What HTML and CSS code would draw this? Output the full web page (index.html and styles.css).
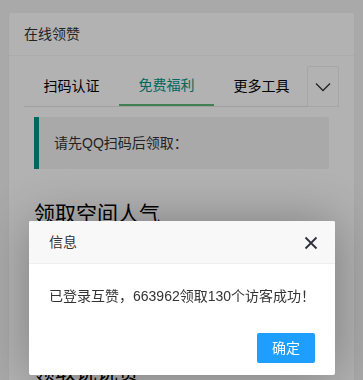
FILE: index.html
```html
<!DOCTYPE html>
<html lang="zh-CN">
<head>
<meta charset="UTF-8">
<meta name="viewport" content="width=device-width, initial-scale=1.0">
<title>在线领赞</title>
<link rel="stylesheet" href="styles.css">
</head>
<body>

<div class="card">
  <div class="card-header">在线领赞</div>
  <div class="card-body">
    <div class="tab">
      <ul class="tab-title">
        <li>扫码认证</li>
        <li class="this">免费福利</li>
        <li>更多工具</li>
      </ul>
      <span class="tab-bar">
        <svg width="16" height="10" viewBox="0 0 16 10"><path d="M1 1.5 L8 8.5 L15 1.5" fill="none" stroke="#333" stroke-width="1.3"/></svg>
      </span>
      <div class="tab-content">
        <blockquote class="quote">请先QQ扫码后领取：</blockquote>

        <h2 class="section-title">领取空间人气</h2>
        <div class="section-body">
          <p>每天可领取一次，每次随机获得访客。</p>
          <input class="input" type="text" placeholder="请输入QQ号">
          <button class="btn">立即领取</button>
        </div>

        <h2 class="section-title">领取说说赞</h2>
        <div class="section-body">
          <p>每天可领取一次。</p>
        </div>
      </div>
    </div>
  </div>
</div>

<div class="shade"></div>

<div class="layer">
  <div class="layer-title">
    信息
    <span class="layer-close">
      <svg width="14" height="14" viewBox="0 0 14 14"><path d="M1.5 1.5 L12.5 12.5 M12.5 1.5 L1.5 12.5" fill="none" stroke="#2f2f3a" stroke-width="1.8"/></svg>
    </span>
  </div>
  <div class="layer-content">已登录互赞，663962领取130个访客成功！</div>
  <div class="layer-btn"><a class="btn-ok">确定</a></div>
</div>

</body>
</html>
```
FILE: styles.css
```css
* {
  box-sizing: border-box;
}
html {
  background-color: #f2f2f2;
}
body {
  margin: 0;
  padding: 13px 9px 0;
  font-family: "Liberation Sans", "Noto Sans CJK SC", sans-serif;
  font-size: 14px;
  color: #333;
  overflow: hidden;
}
.card {
  background-color: #fff;
  border-radius: 2px;
  box-shadow: 0 1px 2px 0 rgba(0,0,0,.05);
}
.card-header {
  height: 43px;
  line-height: 42px;
  padding: 0 15px;
  border-bottom: 1px solid #f6f6f6;
}
.card-body {
  padding: 10px 15px;
}
.tab {
  position: relative;
}
.tab-title {
  display: flex;
  margin: 0;
  padding: 0;
  list-style: none;
  height: 41px;
  border-bottom: 1px solid #e6e6e6;
}
.tab-title li {
  padding: 0 19.5px;
  line-height: 40px;
  color: #000;
  cursor: pointer;
}
.tab-title li.this {
  color: #009688;
  border-bottom: 2px solid #5fb878;
  height: 40px;
  line-height: 38px;
}
.tab-bar {
  position: absolute;
  right: 0;
  top: 0;
  width: 32px;
  height: 41px;
  border: 1px solid #eee;
  border-radius: 2px;
  background-color: #fff;
  display: flex;
  align-items: center;
  justify-content: center;
}
.tab-content {
  padding: 10px;
}
.quote {
  margin: 0 0 10px;
  padding: 15px;
  line-height: 22px;
  border-left: 5px solid #009688;
  border-radius: 0 2px 2px 0;
  background-color: #f2f2f2;
}
.section-title {
  margin: 30px 0 0;
  font-size: 21px;
  line-height: 30px;
  font-weight: normal;
  color: #000;
}
.section-body p {
  margin: 8px 0;
  line-height: 22px;
}
.input {
  display: block;
  width: 100%;
  height: 30px;
  padding: 0 10px;
  border: 1px solid #e6e6e6;
  border-radius: 2px;
}
.btn {
  display: block;
  height: 30px;
  padding: 0 15px;
  border: none;
  border-radius: 2px;
  background-color: #009688;
  color: #fff;
}
.shade {
  position: fixed;
  left: 0;
  top: 0;
  right: 0;
  bottom: 0;
  background-color: rgba(0,0,0,.3);
}
.layer {
  position: fixed;
  left: 29px;
  top: 221px;
  width: 306px;
  background-color: #fff;
  border-radius: 2px;
  box-shadow: 1px 1px 50px rgba(0,0,0,.3);
}
.layer-title {
  position: relative;
  height: 43px;
  line-height: 42px;
  padding: 0 80px 0 20px;
  background-color: #f8f8f8;
  border-bottom: 1px solid #eee;
  border-radius: 2px 2px 0 0;
  color: #333;
}
.layer-close {
  position: absolute;
  right: 17px;
  top: 15px;
  width: 14px;
  height: 14px;
  display: flex;
}
.layer-content {
  padding: 20px 10px 20px 20px;
  line-height: 24px;
  color: #333;
  white-space: nowrap;
}
.layer-btn {
  padding: 0 15px 12px;
  text-align: right;
}
.btn-ok {
  display: inline-block;
  height: 30px;
  line-height: 30px;
  margin: 5px 5px 0;
  padding: 0 15px;
  border-radius: 2px;
  background-color: #1e9fff;
  color: #fff;
}
```
